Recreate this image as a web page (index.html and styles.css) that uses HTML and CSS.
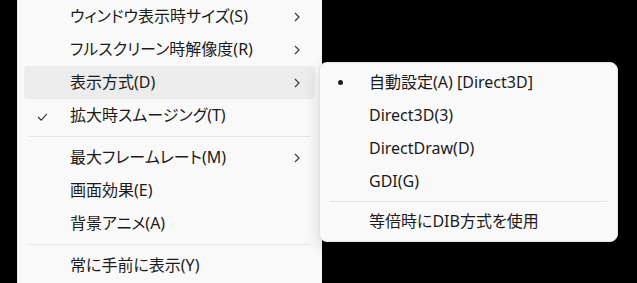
FILE: index.html
```html
<!DOCTYPE html>
<html lang="ja">
<head>
    <meta charset="UTF-8">
    <title>表示方式メニュー</title>
    <link rel="stylesheet" href="styles.css">
</head>
<body>
    <div class="menu">
        <div class="item">
            <span class="mark"></span><span class="label">ウィンドウ表示時サイズ(S)</span>
            <svg class="chevron" viewBox="0 0 6 10"><path d="M1 1l4 4-4 4"/></svg>
        </div>
        <div class="item">
            <span class="mark"></span><span class="label">フルスクリーン時解像度(R)</span>
            <svg class="chevron" viewBox="0 0 6 10"><path d="M1 1l4 4-4 4"/></svg>
        </div>
        <div class="item active">
            <span class="mark"></span><span class="label">表示方式(D)</span>
            <svg class="chevron" viewBox="0 0 6 10"><path d="M1 1l4 4-4 4"/></svg>
        </div>
        <div class="item">
            <span class="mark"><svg class="check" viewBox="0 0 12 9"><path d="M1 4.5l3.5 3.5 6.5-7"/></svg></span><span class="label">拡大時スムージング(T)</span>
        </div>
        <div class="sep"></div>
        <div class="item">
            <span class="mark"></span><span class="label">最大フレームレート(M)</span>
            <svg class="chevron" viewBox="0 0 6 10"><path d="M1 1l4 4-4 4"/></svg>
        </div>
        <div class="item">
            <span class="mark"></span><span class="label">画面効果(E)</span>
        </div>
        <div class="item">
            <span class="mark"></span><span class="label">背景アニメ(A)</span>
        </div>
        <div class="sep"></div>
        <div class="item">
            <span class="mark"></span><span class="label">常に手前に表示(Y)</span>
        </div>
    </div>

    <div class="submenu">
        <div class="item">
            <span class="mark"><span class="dot"></span></span><span class="label">自動設定(A) [Direct3D]</span>
        </div>
        <div class="item">
            <span class="mark"></span><span class="label">Direct3D(3)</span>
        </div>
        <div class="item">
            <span class="mark"></span><span class="label">DirectDraw(D)</span>
        </div>
        <div class="item">
            <span class="mark"></span><span class="label">GDI(G)</span>
        </div>
        <div class="sep"></div>
        <div class="item">
            <span class="mark"></span><span class="label">等倍時にDIB方式を使用</span>
        </div>
    </div>
</body>
</html>
```

FILE: styles.css
```css
body {
    margin: 0;
    width: 637px;
    height: 283px;
    overflow: hidden;
    background-color: #000;
    font-family: 'Noto Sans', 'Noto Sans CJK JP', sans-serif;
    font-size: 16px;
    font-feature-settings: "palt";
    color: #1b1b1b;
    position: relative;
}
.menu {
    margin-left: 17px;
    width: 305px;
    height: 283px;
    box-sizing: border-box;
    padding: 0 7px 0 6px;
    background-color: #f9f9f9;
    border-left: 1px solid #e6e6e6;
}
.item {
    display: flex;
    align-items: center;
    height: 33px;
    border-radius: 4px;
    padding-right: 15px;
}
.item.active {
    background-color: #ececec;
}
.mark {
    width: 46px;
    display: flex;
    justify-content: center;
    align-items: center;
    flex-shrink: 0;
}
.label {
    flex: 1;
    white-space: nowrap;
    line-height: 1;
    padding-bottom: 1px;
}
.chevron {
    width: 6px;
    height: 10px;
    fill: none;
    stroke: #3a3a3a;
    stroke-width: 1.2;
}
.check {
    width: 11px;
    height: 8px;
    fill: none;
    stroke: #2b2b2b;
    stroke-width: 1.2;
    margin-left: -10px;
    margin-top: 2px;
}
.sep {
    height: 1px;
    margin: 4px 5px 4px 5px;
    background-color: #e3e3e3;
}
.submenu {
    position: absolute;
    left: 319px;
    top: 62px;
    width: 285px;
    padding: 3px 6px;
    background-color: #f9f9f9;
    border: 1px solid #e2e2e2;
    border-radius: 8px;
    box-shadow: 0 6px 16px rgba(0, 0, 0, 0.14);
}
.submenu .mark {
    width: 43px;
}
.submenu .sep {
    margin: 3px 4px;
}
.dot {
    width: 5px;
    height: 5px;
    border-radius: 50%;
    background-color: #1b1b1b;
    margin-left: -14px;
}
```
